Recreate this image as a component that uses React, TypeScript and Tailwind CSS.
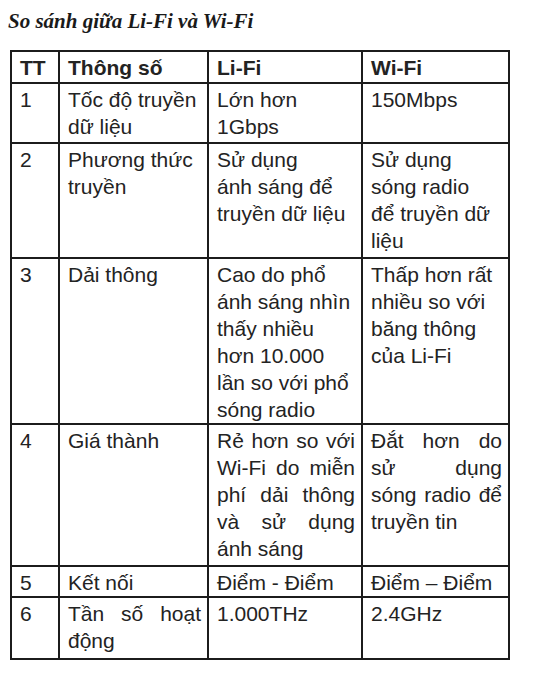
import React from "react";

type Line = { t: string; j?: boolean };
type Cell = Line[];

const L = (t: string, j = false): Line => ({ t, j });

const rows: { tt: string; h: string; c: Cell[] }[] = [
  {
    tt: "1",
    h: "h-[60px]",
    c: [
      [L("Tốc độ truyền"), L("dữ liệu")],
      [L("Lớn hơn"), L("1Gbps")],
      [L("150Mbps")],
    ],
  },
  {
    tt: "2",
    h: "h-[115px]",
    c: [
      [L("Phương thức"), L("truyền")],
      [L("Sử dụng"), L("ánh sáng để"), L("truyền dữ liệu")],
      [L("Sử dụng"), L("sóng radio"), L("để truyền dữ"), L("liệu")],
    ],
  },
  {
    tt: "3",
    h: "h-[166px]",
    c: [
      [L("Dải thông")],
      [
        L("Cao do phổ"),
        L("ánh sáng nhìn"),
        L("thấy nhiều"),
        L("hơn 10.000"),
        L("lần so với phổ"),
        L("sóng radio"),
      ],
      [L("Thấp hơn rất"), L("nhiều so với"), L("băng thông"), L("của Li-Fi")],
    ],
  },
  {
    tt: "4",
    h: "h-[142px]",
    c: [
      [L("Giá thành")],
      [
        L("Rẻ hơn so với", true),
        L("Wi-Fi do miễn", true),
        L("phí dải thông", true),
        L("và sử dụng", true),
        L("ánh sáng"),
      ],
      [L("Đắt hơn do", true), L("sử dụng", true), L("sóng radio để", true), L("truyền tin")],
    ],
  },
  {
    tt: "5",
    h: "h-[31px]",
    c: [[L("Kết nối")], [L("Điểm - Điểm")], [L("Điểm – Điểm")]],
  },
  {
    tt: "6",
    h: "h-[62px]",
    c: [[L("Tần số hoạt", true), L("động")], [L("1.000THz")], [L("2.4GHz")]],
  },
];

function CellLines({ lines }: { lines: Cell }) {
  return (
    <>
      {lines.map((l, i) =>
        l.j ? (
          <div key={i} className="text-justify [text-align-last:justify] whitespace-nowrap">
            {l.t}
          </div>
        ) : (
          <div key={i} className="whitespace-nowrap">
            {l.t}
          </div>
        )
      )}
    </>
  );
}

export default function App() {
  const td = "border-2 border-[#1c1c1c] align-top pt-[2px] pb-0 pl-[8px] pr-[6px]";
  return (
    <div
      className="w-[535px] h-[679px] bg-white text-[#232323]"
      style={{ fontFamily: '"Liberation Sans", Arial, sans-serif' }}
    >
      <div
        className="pt-[10px] pl-[8px] text-[21px] leading-[22px] font-bold italic text-[#1a1a1a]"
        style={{ fontFamily: '"Liberation Serif", "Times New Roman", serif' }}
      >
        So sánh giữa Li-Fi và Wi-Fi
      </div>
      <div className="pt-[18px] pl-[10px]">
        <table className="table-fixed border-collapse w-[498px] text-[21px] leading-[27px]">
          <colgroup>
            <col className="w-[48px]" />
            <col className="w-[149px]" />
            <col className="w-[154px]" />
            <col className="w-[147px]" />
          </colgroup>
          <thead>
            <tr className="font-bold h-[32px]">
              <td className={td}>TT</td>
              <td className={td}>Thông số</td>
              <td className={td}>Li-Fi</td>
              <td className={td}>Wi-Fi</td>
            </tr>
          </thead>
          <tbody>
            {rows.map((r) => (
              <tr key={r.tt} className={r.h}>
                <td className={td}>{r.tt}</td>
                {r.c.map((c, i) => (
                  <td key={i} className={td}>
                    <CellLines lines={c} />
                  </td>
                ))}
              </tr>
            ))}
          </tbody>
        </table>
      </div>
    </div>
  );
}
